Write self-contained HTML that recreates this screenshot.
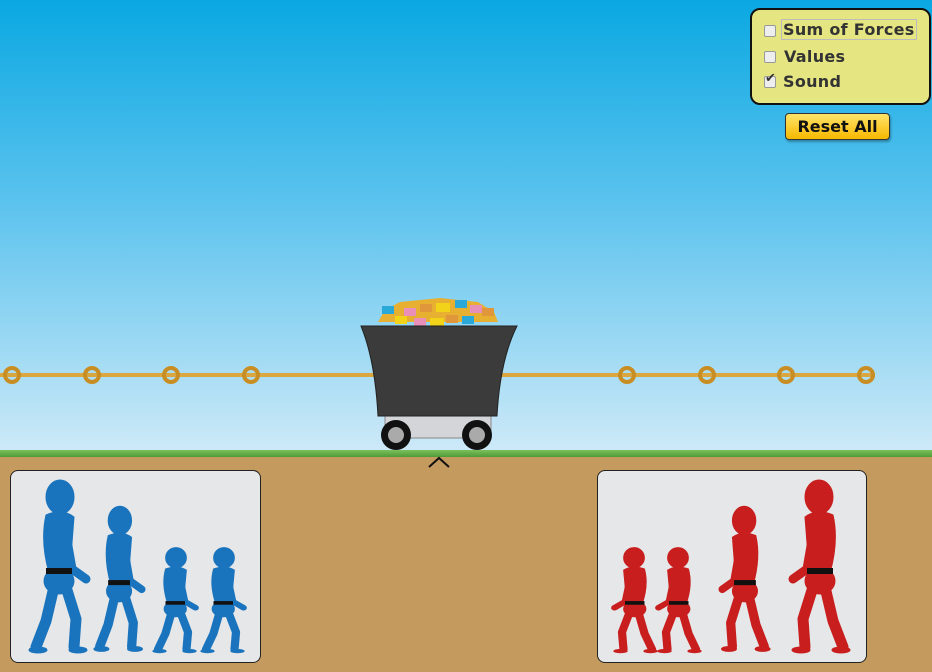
<!DOCTYPE html>
<html><head><style>
body{margin:0;width:932px;height:672px;overflow:hidden;position:relative;font-family:"DejaVu Sans","Liberation Sans",sans-serif;}
.sky{position:absolute;left:0;top:0;width:932px;height:455px;background:linear-gradient(#0aa8e2,#5cc3ee 45%,#cfeaf8);}
.ground{position:absolute;left:0;top:455px;width:932px;height:217px;background:#c49a5e;}
.grass{position:absolute;left:0;top:450px;width:932px;height:7px;background:linear-gradient(#7cc05a,#4f9a3a);}
.panel{position:absolute;background:#e6e7e9;border:1px solid #222;border-radius:8px;}
.ctl{position:absolute;left:750px;top:8px;width:177px;height:93px;background:#e5e682;border:2px solid #111;border-radius:10px;}
.row{position:absolute;left:12px;font-size:16px;font-weight:bold;color:#333;letter-spacing:.3px}
.cb{position:absolute;left:0;width:10px;height:10px;border:1px solid #999;border-radius:2px;background:#eee;}
.reset{position:absolute;left:785px;top:113px;width:103px;height:25px;border:1px solid #333;border-radius:4px;background:linear-gradient(#ffe46a,#f7b800);font-weight:bold;font-size:16px;text-align:center;line-height:25px;color:#111;box-shadow:1px 2px 2px rgba(0,0,0,.3)}
</style></head><body>
<div class="sky"></div>
<div class="ground"></div>
<div class="grass"></div>
<svg width="932" height="672" style="position:absolute;left:0;top:0">
<defs>
<g id="fig">
<ellipse cx="32" cy="16" rx="14" ry="17"/>
<path d="M18 34 Q34 27 46 36 L42 88 L21 92 Q12 60 18 34Z"/>
<ellipse cx="31" cy="100" rx="15" ry="13"/>
<polyline points="36,42 44,88 58,98" fill="none" stroke-width="9" stroke-linecap="round" stroke-linejoin="round"/>
<polyline points="26,106 18,140 8,166" fill="none" stroke-width="11" stroke-linecap="round" stroke-linejoin="round"/>
<polyline points="38,106 48,138 46,166" fill="none" stroke-width="11" stroke-linecap="round" stroke-linejoin="round"/>
<ellipse cx="10" cy="169" rx="9" ry="3"/>
<ellipse cx="50" cy="169" rx="9" ry="3"/>
<rect x="18" y="87" width="26" height="6" fill="#111" stroke="none"/>
</g>
</defs>
<line x1="0" y1="375" x2="875" y2="375" stroke="#d9a640" stroke-width="4"/>
<g fill="none" stroke="#c98e23" stroke-width="4">
<circle cx="12" cy="375" r="7"/><circle cx="92" cy="375" r="7"/><circle cx="171" cy="375" r="7"/><circle cx="251" cy="375" r="7"/>
<circle cx="627" cy="375" r="7"/><circle cx="707" cy="375" r="7"/><circle cx="786" cy="375" r="7"/><circle cx="866" cy="375" r="7"/>
</g>
<g>
<path d="M378 322 L498 322 L494 312 L478 302 L440 298 L400 302 L385 310Z" fill="#e8b030"/>
<rect x="382" y="306" width="12" height="8" fill="#2aa8d8"/><rect x="404" y="308" width="12" height="8" fill="#e890b8"/>
<rect x="420" y="304" width="12" height="8" fill="#e0963a"/><rect x="436" y="303" width="14" height="9" fill="#f2d31a"/>
<rect x="455" y="300" width="12" height="8" fill="#2aa8d8"/><rect x="470" y="305" width="12" height="8" fill="#e890b8"/>
<rect x="482" y="308" width="12" height="8" fill="#e0963a"/><rect x="395" y="316" width="12" height="8" fill="#f2d31a"/>
<rect x="430" y="318" width="14" height="8" fill="#f2d31a"/><rect x="462" y="316" width="12" height="8" fill="#2aa8d8"/>
<rect x="414" y="318" width="12" height="8" fill="#e890b8"/><rect x="446" y="315" width="12" height="8" fill="#e0963a"/>
<rect x="385" y="412" width="106" height="26" fill="#d4d5d8" stroke="#888"/>
<path d="M361 326 L517 326 Q500 360 497 416 L378 416 Q375 360 361 326Z" fill="#3b3b3b" stroke="#222"/>
<circle cx="396" cy="435" r="15" fill="#111"/><circle cx="396" cy="435" r="8" fill="#aaa"/>
<circle cx="477" cy="435" r="15" fill="#111"/><circle cx="477" cy="435" r="8" fill="#aaa"/>
</g>
<polyline points="429,467 439,458 449,467" fill="none" stroke="#111" stroke-width="2"/>
</svg>
<div class="panel" style="left:10px;top:470px;width:249px;height:191px"></div>
<div class="panel" style="left:597px;top:470px;width:268px;height:191px"></div>
<svg width="932" height="672" style="position:absolute;left:0;top:0">
<g fill="#1a74bd" stroke="#1a74bd">
<use href="#fig" transform="translate(28,481)"/>
<use href="#fig" transform="translate(93,507) scale(.84)"/>
<use href="#fig" transform="translate(152,548) scale(.75,.61)"/>
<use href="#fig" transform="translate(200,548) scale(.75,.61)"/>
</g>
<g fill="#c81e1e" stroke="#c81e1e">
<use href="#fig" transform="translate(851,481) scale(-1,1)"/>
<use href="#fig" transform="translate(771,507) scale(-.84,.84)"/>
<use href="#fig" transform="translate(702,548) scale(-.75,.61)"/>
<use href="#fig" transform="translate(658,548) scale(-.75,.61)"/>
</g>
</svg>
<div class="ctl">
<div class="row" style="top:11px"><span class="cb" style="top:4px"></span><span style="position:absolute;left:17px;border:1px solid #bbb;padding:0 1px;white-space:nowrap;top:-2px">Sum of Forces</span></div>
<div class="row" style="top:37px"><span class="cb" style="top:4px"></span><span style="position:absolute;left:20px">Values</span></div>
<div class="row" style="top:62px"><span class="cb" style="top:4px"></span><span style="position:absolute;left:1px;top:-1px;font-size:13px">✔</span><span style="position:absolute;left:19px">Sound</span></div>
</div>
<div class="reset">Reset All</div>
</body></html>
